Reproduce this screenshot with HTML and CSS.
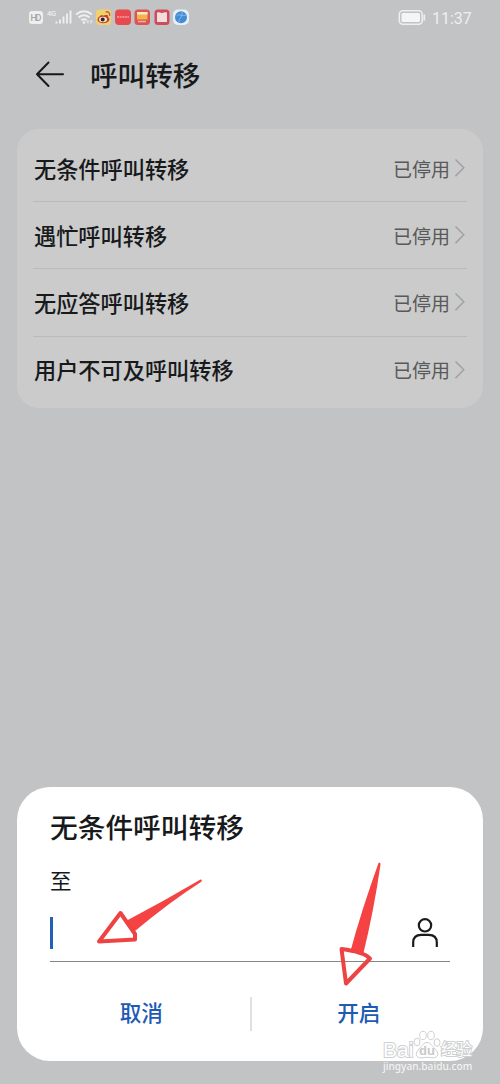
FILE: index.html
```html
<!DOCTYPE html>
<html lang="zh-CN">
<head>
<meta charset="utf-8">
<title>呼叫转移</title>
<link rel="stylesheet" href="styles.css">
</head>
<body>
<main class="screen">
  <header class="status-bar">
    <svg class="status-icons" width="164" height="20" viewBox="0 0 164 20">
      <rect x="1" y="3" width="14" height="13" rx="3" fill="#eeefef"/>
      <text class="hd-text" x="8" y="12.700" text-anchor="middle" textLength="11">HD</text>
      <text class="net-text" x="19" y="7.500" textLength="9">4G</text>
      <path d="M28.500 15.500v-2M32 15.500v-4M35.500 15.500V8.500M39 15.500V5.500M42.500 15.500V2.500" stroke="#eeefef" stroke-width="1.900"/>
      <path d="M48 6.500q8-6.500 16 0M50.500 9.500q5.500-4.500 11 0M53.200 12.300q2.800-2.300 5.600 0" fill="none" stroke="#eeefef" stroke-width="1.900"/>
      <circle cx="56" cy="14.600" r="1.300" fill="#eeefef"/>
      <path d="M60 12.200v3M58.800 13.800l1.200 1.500M63 15.500v-3M64.200 13.800L63 12.200" stroke="#eeefef" fill="none"/>
      <rect x="68" y="1.500" width="15" height="15.500" rx="3" fill="#f1d16c"/>
      <path d="M79 7c1.500 0 1 2 1 2 4 3-1 6.500-5 6.200-5 0-7.500-3.800-3.500-6.700 2-2 3.500-2 3-.5 1.500-.8 3.500-1.200 4.500-1z" fill="#b94531"/>
      <ellipse cx="75" cy="11.500" rx="4" ry="2.800" fill="#f5e8df"/>
      <circle cx="74.700" cy="11.600" r="2" fill="#39211b"/>
      <path d="M77.500 4c3-1 5 1.500 4 4" fill="none" stroke="#c85a36" stroke-width="1.300"/>
      <rect x="87" y="1.500" width="16" height="15.500" rx="4" fill="#e7494e"/>
      <path d="M89 9h12" stroke="#f2a0a0" stroke-width="1.400" stroke-dasharray="2 .6"/>
      <rect x="106.500" y="1.500" width="15.500" height="15.500" rx="3.500" fill="#dc5552"/>
      <path d="M109 4h10.500v7.500H109z" fill="#f6b347"/>
      <path d="M109 4h10.500v2.500H109z" fill="#f3e9d1"/>
      <path d="M110 13.500h8" stroke="#f2b5aa" stroke-width="1.500"/>
      <rect x="126.500" y="1.500" width="15" height="15.500" rx="3.500" fill="#cf4c5b"/>
      <path d="M129 4.500q2.500-1 5 .8 2.500-1.800 5-.8v9.500h-10z" fill="#f3dedd"/>
      <rect x="145" y="1.500" width="16" height="15.500" rx="5" fill="#e7f0f6"/>
      <circle cx="153" cy="9.200" r="6" fill="#438bd5"/>
      <path d="M148.500 8c3-3 6.500 1 9.500-1M151 14c0-4 4-5 3-10" fill="none" stroke="#8bbced" stroke-width="1"/>
    </svg>
    <div class="status-right">
      <svg width="29" height="16" viewBox="0 0 29 16">
        <rect x="1.300" y=".8" width="22.900" height="13.400" rx="3.500" fill="none" stroke="#eeefef" stroke-width="1.500"/>
        <rect x="3.500" y="3" width="18.500" height="9" rx="1.500" fill="#f5f5f5"/>
        <path d="M26.300 4.500v6" stroke="#eeefef" stroke-width="1.700"/>
      </svg>
      <span class="clock">11:37</span>
    </div>
  </header>

  <div class="title-bar">
    <svg width="30" height="28" viewBox="0 0 30 28" fill="none" stroke="#17191b" stroke-width="2" stroke-linecap="round" stroke-linejoin="round">
      <path d="M13.500 1.500L2 13.200l11.500 11.800M2 13.200h26"/>
    </svg>
    <h1 class="page-title">呼叫转移</h1>
  </div>

  <section class="card">
    <div class="row"><span class="row-label">无条件呼叫转移</span><span class="row-value">已停用</span><svg class="chevron" width="12" height="20" viewBox="0 0 12 20"><path d="M1.500 1.500l8.300 8.300-8.300 8.300"/></svg></div>
    <div class="row"><span class="row-label">遇忙呼叫转移</span><span class="row-value">已停用</span><svg class="chevron" width="12" height="20" viewBox="0 0 12 20"><path d="M1.500 1.500l8.300 8.300-8.300 8.300"/></svg></div>
    <div class="row"><span class="row-label">无应答呼叫转移</span><span class="row-value">已停用</span><svg class="chevron" width="12" height="20" viewBox="0 0 12 20"><path d="M1.500 1.500l8.300 8.300-8.300 8.300"/></svg></div>
    <div class="row"><span class="row-label">用户不可及呼叫转移</span><span class="row-value">已停用</span><svg class="chevron" width="12" height="20" viewBox="0 0 12 20"><path d="M1.500 1.500l8.300 8.300-8.300 8.300"/></svg></div>
  </section>

  <section class="dialog">
    <h2 class="dialog-title">无条件呼叫转移</h2>
    <div class="field-label">至</div>
    <div class="field">
      <span class="caret"></span>
      <svg width="28" height="32" viewBox="0 0 28 32" fill="none" stroke="#1b1b1b" stroke-width="2.200">
        <circle cx="14" cy="8.300" r="6.200"/>
        <path d="M2.200 30v-4.500q0-7.700 8-7.700h7.600q8 0 8 7.700V30"/>
      </svg>
    </div>
    <div class="actions">
      <span class="action">取消</span>
      <span class="action-divider"></span>
      <span class="action">开启</span>
    </div>
  </section>

  <svg class="arrows" width="300" height="140" viewBox="90 855 300 140">
    <path class="arrow-shaft" d="M200.500 879.500Q203 879.500 201 882Q171 901 135 931L126 921Q164 901 200.500 879.500Z"/>
    <path class="arrow-head" d="M120.500 913L99 941.500L135 939.500V934Z"/>
    <path class="arrow-shaft" d="M378.500 863Q380.500 861.500 380.500 864.500Q374 910 363 955L350.500 951Q361 912 378.500 863Z"/>
    <path class="arrow-head" d="M341.500 949L346 983.500L370 958.500Q364 952 341.500 949Z"/>
    <path class="field-line" d="M345 961.500h20"/>
  </svg>

  <div class="watermark">
    <div class="wm-brand">
      <span class="wm-outline wm-bai">Bai</span>
      <svg width="28" height="30" viewBox="0 0 28 30" fill="#fff" stroke="#cfd0d1" stroke-width="1">
        <ellipse cx="4" cy="12" rx="3" ry="3.800"/>
        <ellipse cx="10" cy="5.500" rx="3.300" ry="4.200"/>
        <ellipse cx="18" cy="5.500" rx="3.300" ry="4.200"/>
        <ellipse cx="24" cy="12.500" rx="3" ry="3.800"/>
        <path d="M14 12.500c-3.500 0-5 3.500-8 6.500-6 6-1 9.500 3 8.800 4-.6 6-.6 10 0 4 .7 9-2.800 3-8.800-3-3-4.500-6.500-8-6.500z"/>
        <text class="wm-du" x="14" y="25" text-anchor="middle">du</text>
      </svg>
      <span class="wm-outline wm-name">经验</span>
    </div>
    <div class="wm-url">jingyan.baidu.com</div>
  </div>
</main>
</body>
</html>
```
FILE: styles.css
```css
* {
  box-sizing: border-box;
}

body {
  margin: 0;
  background: #c2c3c5;
  font-family: "Noto Sans", "Noto Sans CJK SC", sans-serif;
  color: #17191b;
}

.screen {
  position: relative;
  display: flex;
  flex-direction: column;
  width: 500px;
  height: 1084px;
  padding: 0 17px 23px;
  overflow: hidden;
}

.status-bar {
  display: flex;
  justify-content: space-between;
  height: 36px;
  padding: 8px 11px 0;
}

.hd-text {
  font: 500 9px Roboto, sans-serif;
  fill: #a5a6a7;
}

.net-text {
  font: 500 7.500px Roboto, sans-serif;
  fill: #eeefef;
}

.status-right {
  display: flex;
  gap: 5px;
  padding-top: 2px;
}

.clock {
  width: 40px;
  font: 16px/17px Roboto, sans-serif;
  color: #eeefef;
  white-space: nowrap;
}

.title-bar {
  display: flex;
  align-items: center;
  gap: 25px;
  height: 78px;
  padding-left: 18px;
}

.page-title,
.dialog-title {
  margin: 0;
  font-size: 27.600px;
  font-weight: 500;
  line-height: 40px;
  font-family: "Noto Sans CJK SC", sans-serif;
}

.page-title {
  padding-bottom: 3px;
}

.dialog-title {
  font-size: 27.700px;
}

.card {
  margin-top: 15px;
  height: 279px;
  padding: 6px 16px 4px;
  border-radius: 22px;
  background: #cbcbcb;
}

.row {
  display: flex;
  align-items: center;
  height: 67.200px;
  border-bottom: 1px solid #bababa;
  font-family: "Noto Sans CJK SC", sans-serif;
}

.row:last-child {
  height: 66px;
  border-bottom: 0;
}

.row-label {
  flex: 1;
  padding: 0 0 1px 1px;
  font-size: 22.200px;
  font-weight: 500;
  line-height: 32px;
}

.row-value {
  margin-right: 4px;
  padding-top: 1px;
  font-size: 19px;
  line-height: 28px;
  color: #58595a;
}

.chevron {
  margin-right: 1px;
  fill: none;
  stroke: #a0a1a2;
  stroke-width: 1.500;
}

.dialog {
  height: 274px;
  margin-top: auto;
  padding: 19px 33px 0;
  border-radius: 33px;
  background: #fff;
  font-family: "Noto Sans CJK SC", sans-serif;
}

.field-label {
  margin-top: 19px;
  font-size: 21.500px;
  line-height: 30px;
}

.field {
  display: flex;
  justify-content: space-between;
  align-items: center;
  height: 67px;
  padding: 10px 11px 0 0;
  border-bottom: 1px solid #858585;
}

.caret {
  width: 3px;
  height: 32px;
  background: #2560b4;
}

.actions {
  display: flex;
  align-items: center;
  height: 104px;
}

.action {
  flex: 1;
  padding: 0 17px 4px 0;
  font-size: 21.600px;
  font-weight: 500;
  line-height: 32px;
  text-align: center;
  color: #1d5bb5;
}

.action-divider + .action {
  padding: 0 0 4px 16px;
}

.action-divider {
  width: 2px;
  height: 34px;
  background: #e0e0e0;
}

.arrows {
  position: absolute;
  left: 90px;
  top: 855px;
}

.arrow-shaft {
  fill: #f54242;
}

.arrow-head {
  fill: #fff;
  stroke: #ee4343;
  stroke-width: 4;
  stroke-linejoin: round;
}

.field-line {
  stroke: #858585;
  stroke-width: 1;
}

.watermark {
  position: absolute;
  left: 383px;
  top: 1030px;
  width: 92px;
}

.wm-brand {
  display: flex;
  align-items: flex-start;
  height: 30px;
}

.wm-outline {
  color: #fff;
  -webkit-text-stroke: 2px #cfd0d1;
  paint-order: stroke fill;
}

.wm-bai {
  width: 30px;
  font: 400 21px/20px "Liberation Sans", sans-serif;
  padding-top: 10px;
}

.wm-du {
  font: 700 13px "Liberation Sans", sans-serif;
  fill: #c8c9ca;
  stroke: none;
}

.wm-name {
  font: 400 15.500px/20px "Noto Sans CJK SC", sans-serif;
  padding-top: 8px;
  white-space: nowrap;
}

.wm-url {
  font: 500 10.150px/12px "Noto Sans", sans-serif;
  color: #f3f3f3;
  white-space: nowrap;
}
```
